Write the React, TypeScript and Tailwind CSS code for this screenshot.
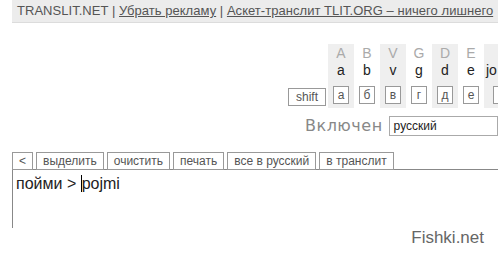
const keys = [
  { up: "A", low: "a", ru: "а", gray: true },
  { up: "B", low: "b", ru: "б", gray: false },
  { up: "V", low: "v", ru: "в", gray: true },
  { up: "G", low: "g", ru: "г", gray: false },
  { up: "D", low: "d", ru: "д", gray: true },
  { up: "E", low: "e", ru: "е", gray: false },
];

const tools = ["<", "выделить", "очистить", "печать", "все в русский", "в транслит"];

export default function App() {
  return (
    <div className="relative h-[259px] w-[498px] overflow-hidden bg-white font-['Liberation_Sans',Arial,sans-serif]">
      <div className="ml-[12px] flex h-[23px] w-[520px] items-center border-b border-[#dcdcdc] bg-[#ececec] pl-[5px] text-[13px] tracking-[0.04px] text-[#555] whitespace-nowrap">
        TRANSLIT.NET |&nbsp;<span className="underline">Убрать рекламу</span>&nbsp;|&nbsp;
        <span className="underline">Аскет-транслит TLIT.ORG – ничего лишнего</span>
      </div>

      <div className="mt-[21px] ml-[288px] flex w-[260px] items-start">
        <div className="flex h-[64px] w-[40px] shrink-0 items-end pb-[2px]">
          <div className="flex h-[18px] w-[38px] items-center justify-center border border-[#999] text-[12px] text-[#555]">
            shift
          </div>
        </div>
        {keys.map((k) => (
          <div
            key={k.low}
            className={`flex h-[64px] w-[26px] shrink-0 flex-col items-center pt-[1px] ${k.gray ? "bg-[#efefef]" : ""}`}
          >
            <div className="h-[17px] text-[14px] leading-[17px] text-[#aaa]">{k.up}</div>
            <div className="h-[17px] text-[14px] leading-[17px] text-[#222]">{k.low}</div>
            <div className="mt-[7px] flex h-[18px] w-[16px] items-center justify-center border border-[#999] bg-white text-[12px] text-[#555]">
              {k.ru}
            </div>
          </div>
        ))}
        <div className="flex h-[64px] w-[30px] shrink-0 flex-col bg-[#efefef] pt-[18px] pl-[2px]">
          <div className="h-[17px] text-[14px] leading-[17px] text-[#222]">jo</div>
          <div className="mt-[7px] ml-[7px] h-[18px] w-[16px] border border-[#999] bg-white" />
        </div>
      </div>

      <div className="mt-[8px] ml-[305px] flex items-center gap-[6px]">
        <span className="font-['DejaVu_Sans',sans-serif] text-[16px] leading-[20px] tracking-[0.5px] text-[#888]">
          Включен
        </span>
        <div className="flex h-[20px] w-[140px] items-center border border-[#aaa] pl-[4px] text-[12px] text-[#222]">
          русский
        </div>
      </div>

      <div className="mt-[16px] ml-[12px] flex gap-[3px]">
        {tools.map((t) => (
          <div
            key={t}
            className="flex h-[18px] items-center border border-[#999] bg-white px-[6px] text-[12px] text-[#555]"
          >
            {t}
          </div>
        ))}
      </div>
      <div className="-mt-[1px] ml-[12px] h-[59px] border-t border-l border-[#888] pl-[3px] pt-[5px] text-[16px] leading-[18px] text-[#222]">
        пойми &gt; <span className="border-l border-black">pojmi</span>
      </div>

      <div className="absolute right-[14px] bottom-[9px] text-[17px] text-[#666]">Fishki.net</div>
    </div>
  );
}
